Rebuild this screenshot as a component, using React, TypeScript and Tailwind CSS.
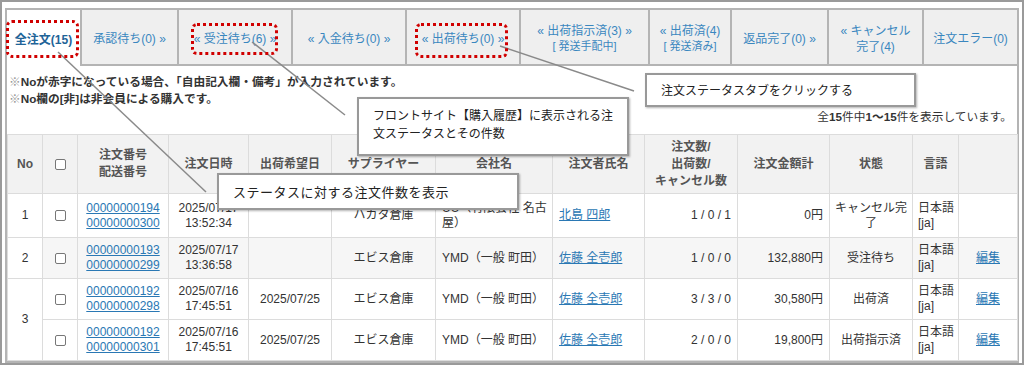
import React from 'react';

type Tab = {
  lines: string[];
  sub?: string;
  width: string;
  active?: boolean;
};

const tabs: Tab[] = [
  { lines: ['全注文(15)'], width: 'w-[73px]', active: true },
  { lines: ['承認待ち(0) »'], width: 'w-[97px]' },
  { lines: ['« 受注待ち(6) »'], width: 'w-[114px]' },
  { lines: ['« 入金待ち(0) »'], width: 'w-[114px]' },
  { lines: ['« 出荷待ち(0) »'], width: 'w-[114px]' },
  { lines: ['« 出荷指示済(3) »'], sub: '[ 発送手配中]', width: 'w-[129px]' },
  { lines: ['« 出荷済(4)'], sub: '[ 発送済み]', width: 'w-[82px]' },
  { lines: ['返品完了(0) »'], width: 'w-[97px]' },
  { lines: ['« キャンセル', '完了(4)'], width: 'w-[95px]' },
  { lines: ['注文エラー(0)'], width: 'flex-1' },
];

type Row = {
  no?: string;
  span?: number;
  order: string;
  delivery: string;
  date: string;
  time: string;
  ship: string;
  supplier: string;
  company: React.ReactNode;
  name: string;
  counts: string;
  amount: string;
  status: React.ReactNode;
  edit: boolean;
  height: string;
  bg: string;
};

const rows: Row[] = [
  {
    no: '1',
    order: '00000000194',
    delivery: '00000000300',
    date: '2025/07/17',
    time: '13:52:34',
    ship: '',
    supplier: 'ハカタ倉庫',
    company: (
      <>
        UU（有限会社 名古
        <br />
        屋）
      </>
    ),
    name: '北島 四郎',
    counts: '1 / 0 / 1',
    amount: '0円',
    status: (
      <>
        キャンセル完
        <br />了
      </>
    ),
    edit: false,
    height: 'h-[44px]',
    bg: 'bg-white',
  },
  {
    no: '2',
    order: '00000000193',
    delivery: '00000000299',
    date: '2025/07/17',
    time: '13:36:58',
    ship: '',
    supplier: 'エビス倉庫',
    company: 'YMD（一般 町田）',
    name: '佐藤 全壱郎',
    counts: '1 / 0 / 0',
    amount: '132,880円',
    status: '受注待ち',
    edit: true,
    height: 'h-[41px]',
    bg: 'bg-[#f6f6f6]',
  },
  {
    no: '3',
    span: 2,
    order: '00000000192',
    delivery: '00000000298',
    date: '2025/07/16',
    time: '17:45:51',
    ship: '2025/07/25',
    supplier: 'エビス倉庫',
    company: 'YMD（一般 町田）',
    name: '佐藤 全壱郎',
    counts: '3 / 3 / 0',
    amount: '30,580円',
    status: '出荷済',
    edit: true,
    height: 'h-[41px]',
    bg: 'bg-white',
  },
  {
    order: '00000000192',
    delivery: '00000000301',
    date: '2025/07/16',
    time: '17:45:51',
    ship: '2025/07/25',
    supplier: 'エビス倉庫',
    company: 'YMD（一般 町田）',
    name: '佐藤 全壱郎',
    counts: '2 / 0 / 0',
    amount: '19,800円',
    status: '出荷指示済',
    edit: true,
    height: 'h-[41px]',
    bg: 'bg-white',
  },
];

const Checkbox = () => (
  <span className="inline-block w-[11px] h-[11px] border border-[#777] rounded-[2px] bg-white align-middle" />
);

const th = 'border border-[#dcdcdc] bg-[#f2f2f2] font-bold text-[#555] text-center px-1 whitespace-nowrap';
const td = 'border border-[#dcdcdc] px-[6px] whitespace-nowrap overflow-hidden';

export default function App() {
  return (
    <div className="relative w-[1024px] h-[365px] overflow-hidden bg-white font-['Liberation_Sans','Noto_Sans_CJK_JP',sans-serif]">
      <div className="h-full border-2 border-[#9a9a9a] px-[3px] pt-[6px]">
        <div className="flex flex-col border-x-2 border-b-2 border-[#b4b4b4]">
          {/* status tabs */}
          <div className="flex h-[58px]">
            {tabs.map((t, i) => (
              <div
                key={i}
                className={`${t.width} flex flex-col items-center justify-center pt-[3px] text-center border-t-2 border-[#b4b4b4] text-[12px] leading-[16px] whitespace-nowrap ${
                  t.active
                    ? 'bg-white font-bold text-[#1f6498]'
                    : 'bg-[#efefef] border-l-2 border-b-2 text-[#3a87bf]'
                }`}
              >
                {t.lines.map((l) => (
                  <span key={l}>{l}</span>
                ))}
                {t.sub && <span className="text-[11px] leading-[15px]">{t.sub}</span>}
              </div>
            ))}
          </div>

          {/* notes */}
          <div className="h-[68px] flex flex-col px-[2px] pt-[7px] text-[11.7px] leading-[17px] text-[#333]">
            <p className="font-bold">
              <span className="font-normal text-[#999]">※</span>Noが赤字になっている場合、「自由記入欄・備考」が入力されています。
            </p>
            <p className="font-bold">
              <span className="font-normal text-[#999]">※</span>No欄の[非]は非会員による購入です。
            </p>
            <p className="mt-[1px] pr-[3px] text-right">
              全<b>15</b>件中<b>1〜15</b>件を表示しています。
            </p>
          </div>

          {/* order table */}
          <table className="w-full table-fixed border-collapse text-[12px] text-[#333]">
            <colgroup>
              <col className="w-[35px]" />
              <col className="w-[35px]" />
              <col className="w-[91px]" />
              <col className="w-[80px]" />
              <col className="w-[83px]" />
              <col className="w-[104px]" />
              <col className="w-[117px]" />
              <col className="w-[92px]" />
              <col className="w-[93px]" />
              <col className="w-[92px]" />
              <col className="w-[83px]" />
              <col className="w-[46px]" />
              <col className="w-[59px]" />
            </colgroup>
            <thead>
              <tr className="h-[59px] leading-[17px]">
                <th className={th}>No</th>
                <th className={th}>
                  <Checkbox />
                </th>
                <th className={th}>
                  注文番号
                  <br />
                  配送番号
                </th>
                <th className={th}>注文日時</th>
                <th className={th}>出荷希望日</th>
                <th className={th}>サプライヤー</th>
                <th className={th}>会社名</th>
                <th className={th}>注文者氏名</th>
                <th className={th}>
                  注文数/
                  <br />
                  出荷数/
                  <br />
                  キャンセル数
                </th>
                <th className={th}>注文金額計</th>
                <th className={th}>状態</th>
                <th className={th}>言語</th>
                <th className={th}></th>
              </tr>
            </thead>
            <tbody>
              {rows.map((r, i) => (
                <tr key={i} className={`${r.height} ${r.bg} leading-[15px]`}>
                  {r.no && (
                    <td rowSpan={r.span} className={`${td} text-center bg-white`}>
                      {r.no}
                    </td>
                  )}
                  <td className={`${td} text-center`}>
                    <Checkbox />
                  </td>
                  <td className={`${td} text-center text-[#2a78b4] underline`}>
                    {r.order}
                    <br />
                    {r.delivery}
                  </td>
                  <td className={`${td} text-center`}>
                    {r.date}
                    <br />
                    {r.time}
                  </td>
                  <td className={`${td} text-center`}>{r.ship}</td>
                  <td className={`${td} text-center`}>{r.supplier}</td>
                  <td className={`${td} text-left`}>{r.company}</td>
                  <td className={`${td} text-left`}>
                    <span className="text-[#2a78b4] underline">{r.name}</span>
                  </td>
                  <td className={`${td} text-right`}>{r.counts}</td>
                  <td className={`${td} text-right`}>{r.amount}</td>
                  <td className="border border-[#dcdcdc] px-[2px] whitespace-nowrap text-center">{r.status}</td>
                  <td className="border border-[#dcdcdc] pl-[5px] pr-0 whitespace-nowrap text-left">
                    日本語
                    <br />
                    [ja]
                  </td>
                  <td className={`${td} text-center`}>
                    {r.edit && <span className="text-[#2a78b4] underline">編集</span>}
                  </td>
                </tr>
              ))}
            </tbody>
          </table>
        </div>
      </div>

      {/* annotation leader lines */}
      <svg className="absolute inset-0 pointer-events-none" width="1024" height="365">
        <line x1="58" y1="52" x2="206" y2="192" stroke="#8a8a8a" strokeWidth="1.5" />
        <line x1="252" y1="42" x2="345" y2="115" stroke="#8a8a8a" strokeWidth="1.5" />
        <line x1="500" y1="46" x2="634" y2="91" stroke="#8a8a8a" strokeWidth="1.5" />
      </svg>

      {/* red dotted highlights */}
      <div className="absolute left-[6px] top-[20px] w-[73px] h-[38px] border-[3px] border-dotted border-[#d00000] rounded-md" />
      <div className="absolute left-[191px] top-[23px] w-[87px] h-[32px] border-[3px] border-dotted border-[#d00000] rounded-md" />
      <div className="absolute left-[415px] top-[23px] w-[93px] h-[35px] border-[3px] border-dotted border-[#d00000] rounded-md" />

      {/* callouts */}
      <div className="absolute left-[357px] top-[97px] w-[272px] h-[59px] bg-white border-2 border-[#999] shadow-[1px_1px_2px_rgba(0,0,0,0.3)] pl-[14px] pt-[7px] text-[12px] leading-[18px] text-[#222] font-['Noto_Sans_CJK_JP',sans-serif]">
        フロントサイト【購入履歴】に表示される注
        <br />
        文ステータスとその件数
      </div>
      <div className="absolute left-[645px] top-[73px] w-[271px] h-[34px] bg-white border-2 border-[#999] shadow-[1px_1px_2px_rgba(0,0,0,0.3)] pl-[14px] flex items-center text-[12px] text-[#222] font-['Noto_Sans_CJK_JP',sans-serif]">
        注文ステータスタブをクリックする
      </div>
      <div className="absolute left-[217px] top-[173px] w-[302px] h-[37px] bg-white border-2 border-[#999] shadow-[1px_1px_2px_rgba(0,0,0,0.3)] pl-[14px] flex items-center text-[13px] tracking-[0.5px] text-[#222] font-['Noto_Sans_CJK_JP',sans-serif]">
        ステータスに対する注文件数を表示
      </div>
    </div>
  );
}
